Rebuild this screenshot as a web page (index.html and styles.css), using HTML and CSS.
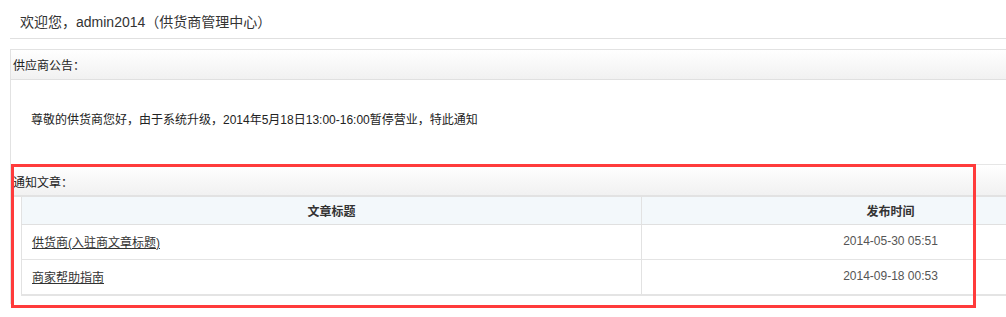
FILE: index.html
```html
<!DOCTYPE html>
<html lang="zh-CN">
<head>
  <meta charset="UTF-8" />
  <title>供货商管理中心</title>
  <link rel="stylesheet" href="styles.css">
</head>
<body>
  <div class="welcome">欢迎您，admin2014（供货商管理中心）</div>

  <div class="panel">
    <div class="panel-hd">供应商公告：</div>
    <div class="notice">尊敬的供货商您好，由于系统升级，2014年5月18日13:00-16:00暂停营业，特此通知</div>

    <div class="panel-hd second">通知文章：</div>
    <div class="list-wrap">
      <table class="list">
        <thead>
          <tr>
            <th class="col-title">文章标题</th>
            <th>发布时间</th>
          </tr>
        </thead>
        <tbody>
          <tr>
            <td><a href="#">供货商(入驻商文章标题)</a></td>
            <td class="date">2014-05-30 05:51</td>
          </tr>
          <tr>
            <td><a href="#">商家帮助指南</a></td>
            <td class="date">2014-09-18 00:53</td>
          </tr>
        </tbody>
      </table>
    </div>
  </div>

  <!-- 标注框 -->
  <div class="mark"></div>
</body>
</html>
```

FILE: styles.css
```css
html, body {
  overflow: hidden;
}
body {
  margin: 0;
  padding: 0;
  font-family: Arial, "Liberation Sans", "Noto Sans CJK SC", sans-serif;
  font-size: 12px;
  color: #333;
  background: #fff;
  position: relative;
  width: 1160px;
  height: 317px;
}
.welcome {
  margin-left: 10px;
  padding-left: 10px;
  height: 38px;
  line-height: 44px;
  font-size: 14px;
  color: #333;
  border-bottom: 1px solid #e0e0e0;
}
.panel {
  margin: 10px 0 0 10px;
  width: 1140px;
  border: 1px solid #e2e2e2;
  border-bottom: none;
}
.panel-hd {
  height: 29px;
  line-height: 32px;
  padding-left: 2px;
  color: #222;
  background: linear-gradient(#ffffff, #f1f1f1);
  border-bottom: 1px solid #e0e0e0;
}
.panel-hd.second {
  height: 30px;
  line-height: 37px;
  border-top: 1px solid #e6e6e6;
  border-bottom: 2px solid #e2e2e2;
}
.notice {
  height: 84px;
  line-height: 81px;
  padding-left: 20px;
  color: #222;
}
.list-wrap {
  padding: 0 0 8px 10px;
}
.list {
  width: 1118px;
  border-collapse: collapse;
  border-left: 1px solid #e2e2e2;
  border-bottom: 2px solid #e4e4e4;
}
.list th {
  height: 24px;
  background: #f3f8fb;
  color: #333;
  font-weight: bold;
  border-bottom: 1px solid #e0e0e0;
  padding: 3px 0 0;
  line-height: 24px;
}
.list th.col-title {
  width: 619px;
  border-right: 1px solid #e2e2e2;
}
.list td {
  height: 32px;
  padding: 0 0 2px 10px;
  border-bottom: 1px solid #e4e4e4;
}
.list td:first-child {
  border-right: 1px solid #e2e2e2;
}
.list tbody tr:last-child td {
  border-bottom: none;
}
.list td a {
  color: #333;
  text-decoration: underline;
}
.list td.date {
  text-align: center;
  color: #555;
  padding: 0 0 2px;
}
.mark {
  position: absolute;
  left: 11px;
  top: 164px;
  width: 959px;
  height: 138px;
  border: 3px solid #ff3b3b;
}
```
